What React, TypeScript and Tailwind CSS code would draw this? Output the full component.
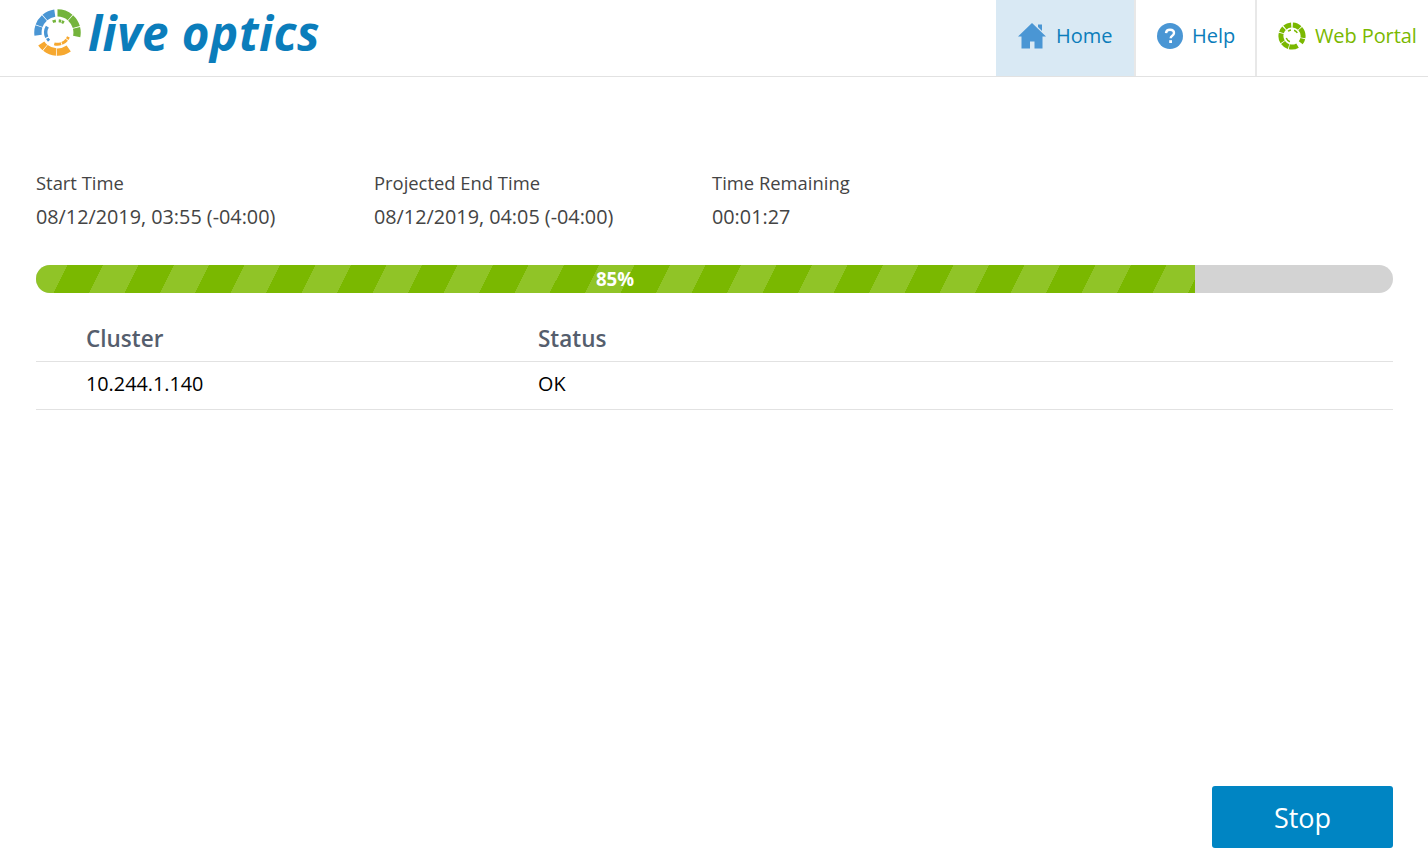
import React from 'react';

const polar = (r: number, deg: number) => {
  const a = ((deg - 90) * Math.PI) / 180;
  return `${(r * Math.cos(a)).toFixed(2)} ${(r * Math.sin(a)).toFixed(2)}`;
};

const arc = (r: number, from: number, to: number) =>
  `M${polar(r, from)} A${r} ${r} 0 ${to - from > 180 ? 1 : 0} 1 ${polar(r, to)}`;

type Seg = [number, number, number, number];

const RingIcon = ({ segs, size, color }: { segs: (Seg | [number, number, number, number, string])[]; size: number; color?: string }) => (
  <svg width={size} height={size} viewBox="-24 -24 48 48" fill="none">
    {segs.map((s, i) => (
      <path key={i} d={arc(s[0], s[1], s[2])} stroke={(s as any)[4] || color} strokeWidth={s[3]} />
    ))}
  </svg>
);

const blue = '#4a96d4';
const green = '#74b43c';
const orange = '#f6a830';

const logoSegs: [number, number, number, number, string][] = [
  [20, 0, 40, 7.5, green],
  [20, 42, 74, 7.5, green],
  [20, 76, 102, 7.5, green],
  [12, 6, 18, 3, green],
  [12, 21, 33, 3, green],
  [12, -24, -8, 3, green],
  [20, 145, 182, 7.5, orange],
  [20, 184, 218, 7.5, orange],
  [20, 220, 236, 7.5, orange],
  [12, 112, 124, 3, orange],
  [12, 128, 158, 3, orange],
  [12, 162, 196, 3, orange],
  [20, 262, 288, 7.5, blue],
  [20, 290, 318, 7.5, blue],
  [20, 320, 352, 7.5, blue],
  [12, 226, 240, 3, blue],
  [12, 246, 300, 3.5, blue],
];

const portalSegs: Seg[] = [
  [19, 4, 44, 8.5],
  [19, 48, 100, 8.5],
  [19, 104, 128, 8.5],
  [19, 150, 194, 8.5],
  [19, 198, 234, 8.5],
  [19, 238, 284, 8.5],
  [19, 288, 314, 8.5],
  [19, 320, 356, 8.5],
  [10.5, 20, 60, 2.5],
  [10.5, 200, 250, 2.5],
  [10.5, 320, 350, 2.5],
];

const HomeIcon = () => (
  <svg width="28" height="26" viewBox="0 0 28 26" fill="#4a96d4">
    <path d="M14 0 L28 13.5 L24.5 13.5 L24.5 25.5 L16.5 25.5 L16.5 18.5 L12 18.5 L12 25.5 L3.5 25.5 L3.5 13.5 L0 13.5 Z" />
    <path d="M20 1.5 H24 V8 L20 4 Z" />
  </svg>
);

const HelpIcon = () => (
  <svg width="26" height="26" viewBox="0 0 26 26">
    <circle cx="13" cy="13" r="13" fill="#4a96d4" />
    <path d="M9 10.2c.2-2.2 1.8-3.4 4-3.4s4 1.2 4 3.3c0 1.5-.9 2.3-2 3-.9.6-1.3 1-1.3 2.1" fill="none" stroke="#fff" strokeWidth="2.4" />
    <rect x="12.2" y="17.2" width="2.8" height="2.8" fill="#fff" />
  </svg>
);

const times = [
  { label: 'Start Time', value: '08/12/2019, 03:55 (-04:00)' },
  { label: 'Projected End Time', value: '08/12/2019, 04:05 (-04:00)' },
  { label: 'Time Remaining', value: '00:01:27' },
];

export default function App() {
  return (
    <div className="h-[861px] w-[1428px] overflow-hidden bg-white flex flex-col font-['Open_Sans',sans-serif]">
      <header className="h-[77px] shrink-0 border-b border-[#e2e2e2] flex justify-between">
        <div className="flex pl-[34px] gap-[7px]">
          <div className="h-[48px] mt-[9px]">
            <RingIcon segs={logoSegs} size={47} />
          </div>
          <span className="text-[47.5px] leading-[66px] font-bold italic text-[#0b7dbb] tracking-[0.5px] whitespace-nowrap">live optics</span>
        </div>
        <nav className="flex h-[76px]">
          <a className="w-[138px] bg-[#d9e9f4] flex items-center pl-[22px] pb-[4px] gap-[10px] text-[20px] text-[#0b7dbb]">
            <HomeIcon />
            <span>Home</span>
          </a>
          <a className="w-[123px] border-l-2 border-r-2 border-[#e8e8e8] flex items-center pl-[21px] pb-[4px] gap-[9px] text-[20px] text-[#0b7dbb]">
            <HelpIcon />
            <span>Help</span>
          </a>
          <a className="w-[171px] flex items-center pl-[21px] pb-[4px] gap-[9px] text-[20px] text-[#7ab800] whitespace-nowrap">
            <RingIcon segs={portalSegs} size={28} color="#7ab800" />
            <span className="tracking-[-0.1px]">Web Portal</span>
          </a>
        </nav>
      </header>

      <main className="flex-1 pl-[36px] pr-[35px] pt-[93px] flex flex-col">
        <div className="flex">
          {times.map(t => (
            <div key={t.label} className="w-[338px] text-[#444] leading-[25px]">
              <div className="mb-[9px] text-[18.4px]">{t.label}</div>
              <div className="text-[19.8px]">{t.value}</div>
            </div>
          ))}
        </div>

        <div className="mt-[36px] h-[28px] rounded-full bg-[#d3d3d3] overflow-hidden">
          <div className="h-full w-[1159px] pr-[1px] flex items-center justify-center text-[18.7px] font-bold text-white bg-[repeating-linear-gradient(116.6deg,#90c427_-3.6px,#90c427_28.1px,#7ab800_28.1px,#7ab800_59.8px)]">
            85%
          </div>
        </div>

        <table className="w-full mt-[21px] text-left">
          <thead>
            <tr className="border-b border-[#e2e2e2] h-[47px]">
              <th className="w-[502px] pl-[50px] pt-[4px] text-[22.5px] font-semibold text-[#555e6d]">Cluster</th>
              <th className="pt-[4px] text-[22.5px] font-semibold text-[#555e6d]">Status</th>
            </tr>
          </thead>
          <tbody>
            <tr className="border-b border-[#e2e2e2] h-[48px]">
              <td className="pl-[50px] pb-[2px] text-[19.8px] text-black">10.244.1.140</td>
              <td className="pb-[2px] text-[19.8px] text-black">OK</td>
            </tr>
          </tbody>
        </table>

        <div className="mt-auto mb-[13px] flex justify-end">
          <button className="w-[181px] h-[62px] pt-[2px] rounded-[3px] bg-[#0085c3] text-white text-[27px]">Stop</button>
        </div>
      </main>
    </div>
  );
}
